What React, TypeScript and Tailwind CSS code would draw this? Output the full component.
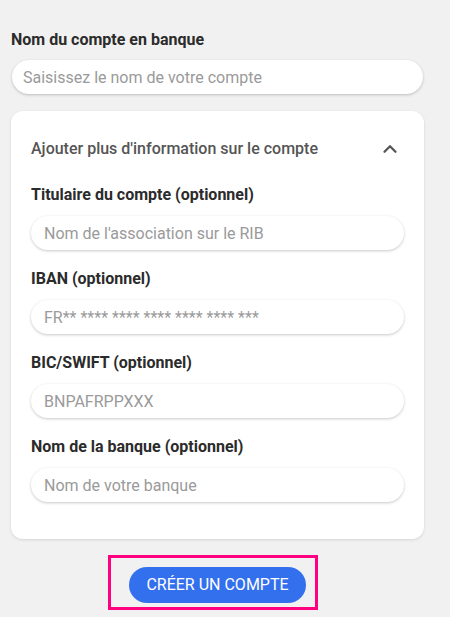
import { ChevronUp } from 'lucide-react'

type FieldProps = {
  label: string
  placeholder: string
}

function Field({ label, placeholder }: FieldProps) {
  return (
    <div className="mb-[19px]">
      <label className="block text-base font-bold leading-5 text-[#2b2b2b]">{label}</label>
      <input
        className="mt-[11px] block h-[34px] w-full rounded-full bg-white px-[13px] text-base text-[#333] shadow-[0_1px_3px_rgba(0,0,0,0.22)] outline-none placeholder:text-[#9a9a9a]"
        placeholder={placeholder}
      />
    </div>
  )
}

export default function App() {
  return (
    <div className="min-h-[617px] w-[450px] bg-[#f1f1f1] pt-[30px] font-['Roboto',sans-serif]">
      <div className="ml-[11px] w-[413px]">
        <label className="block text-base font-bold leading-5 text-[#2b2b2b]">Nom du compte en banque</label>
        <input
          className="mt-[10px] ml-px block h-[34px] w-[411px] rounded-full bg-white px-[11px] text-base text-[#333] shadow-[0_1px_3px_rgba(0,0,0,0.22)] outline-none placeholder:text-[#9a9a9a]"
          placeholder="Saisissez le nom de votre compte"
        />

        <section className="mt-[17px] rounded-xl bg-white px-5 pt-[27px] pb-[18px] shadow-[0_1px_3px_rgba(0,0,0,0.12)]">
          <div className="mb-[25px] flex items-center justify-between pr-[3px]">
            <h2 className="text-base font-medium leading-5 text-[#555]">
              Ajouter plus d'information sur le compte
            </h2>
            <ChevronUp size={22} strokeWidth={2.5} className="text-[#555]" />
          </div>
          <Field label="Titulaire du compte (optionnel)" placeholder="Nom de l'association sur le RIB" />
          <Field label="IBAN (optionnel)" placeholder="FR** **** **** **** **** **** ***" />
          <Field label="BIC/SWIFT (optionnel)" placeholder="BNPAFRPPXXX" />
          <Field label="Nom de la banque (optionnel)" placeholder="Nom de votre banque" />
        </section>

        <div className="mt-4 ml-[97px] w-[210px] border-[3px] border-[#ff0080] pt-[9px] pr-[9px] pb-[4px] pl-[18px]">
          <button className="h-[36px] w-[177px] rounded-full bg-[#3370ee] text-base font-normal uppercase text-white">
            Créer un compte
          </button>
        </div>
      </div>
    </div>
  )
}
